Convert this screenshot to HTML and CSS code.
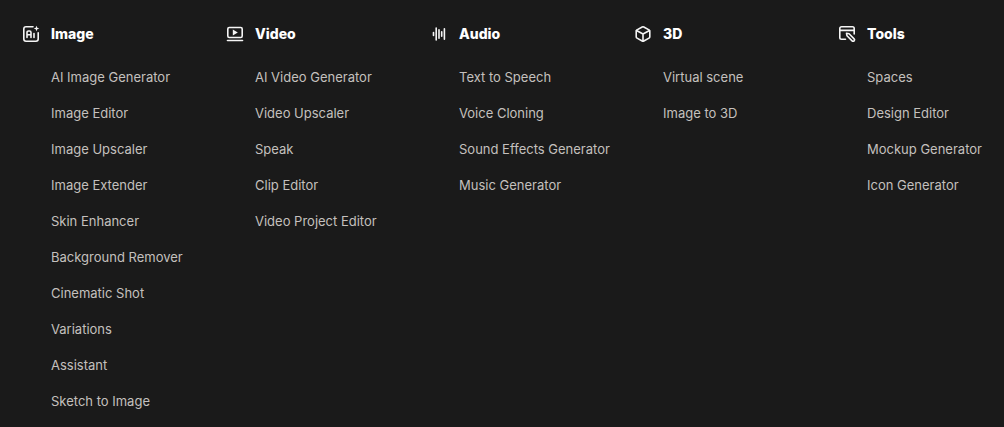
FILE: index.html
```html
<!DOCTYPE html>
<html lang="en">
<head>
<meta charset="utf-8">
<meta name="viewport" content="width=device-width, initial-scale=1">
<title>Tools menu</title>
<link rel="stylesheet" href="styles.css">
</head>
<body>
<nav class="menu" aria-label="Products">
  <section class="group">
    <h2 class="title">
      <svg class="icon" viewBox="0 0 16 16" aria-hidden="true"><path d="M10 .8H3A2.200 2.200 0 0 0 .8 3v10A2.200 2.200 0 0 0 3 15.200h10a2.200 2.200 0 0 0 2.200-2.200V6.800"/><path d="M4 11.500V6.500a1.500 1.500 0 0 1 1.500-1.500h1A1.500 1.500 0 0 1 8 6.500v5M4 8.800h4M11 7.500v4"/><path class="solid" d="M13.500-.3l.8 2 2 .8-2 .8-.8 2-.8-2-2-.8 2-.8z"/></svg>
      Image
    </h2>
    <ul class="list">
      <li><a class="link" href="#">AI Image Generator</a></li>
      <li><a class="link" href="#">Image Editor</a></li>
      <li><a class="link" href="#">Image Upscaler</a></li>
      <li><a class="link" href="#">Image Extender</a></li>
      <li><a class="link" href="#">Skin Enhancer</a></li>
      <li><a class="link" href="#">Background Remover</a></li>
      <li><a class="link" href="#">Cinematic Shot</a></li>
      <li><a class="link" href="#">Variations</a></li>
      <li><a class="link" href="#">Assistant</a></li>
      <li><a class="link" href="#">Sketch to Image</a></li>
    </ul>
  </section>
  <section class="group">
    <h2 class="title">
      <svg class="icon" viewBox="0 0 16 16" aria-hidden="true"><rect x=".8" y="1.500" width="14.400" height="10" rx="1.500"/><path d="M.5 14.500h15"/><path class="solid" d="M5.800 3.600v5.800l5-2.900z"/></svg>
      Video
    </h2>
    <ul class="list">
      <li><a class="link" href="#">AI Video Generator</a></li>
      <li><a class="link" href="#">Video Upscaler</a></li>
      <li><a class="link" href="#">Speak</a></li>
      <li><a class="link" href="#">Clip Editor</a></li>
      <li><a class="link" href="#">Video Project Editor</a></li>
    </ul>
  </section>
  <section class="group">
    <h2 class="title">
      <svg class="icon" viewBox="0 0 16 16" aria-hidden="true"><path d="M2.500 6.500v3M5.200 2v12M8 3.800v8.400M10.700 5.800v4.400M13.400 2.800v10.400"/></svg>
      Audio
    </h2>
    <ul class="list">
      <li><a class="link" href="#">Text to Speech</a></li>
      <li><a class="link" href="#">Voice Cloning</a></li>
      <li><a class="link" href="#">Sound Effects Generator</a></li>
      <li><a class="link" href="#">Music Generator</a></li>
    </ul>
  </section>
  <section class="group">
    <h2 class="title">
      <svg class="icon" viewBox="0 0 16 16" aria-hidden="true"><path d="M7.200 1a1.600 1.600 0 0 1 1.600 0l5.200 2.900a1.600 1.600 0 0 1 .8 1.400v5.400a1.600 1.600 0 0 1-.8 1.400L8.800 15a1.600 1.600 0 0 1-1.600 0L2 12.100a1.600 1.600 0 0 1-.8-1.400V5.300A1.600 1.600 0 0 1 2 3.900z"/><path d="M1.500 4.500L8 8l6.500-3.500M8 8v7"/></svg>
      3D
    </h2>
    <ul class="list">
      <li><a class="link" href="#">Virtual scene</a></li>
      <li><a class="link" href="#">Image to 3D</a></li>
    </ul>
  </section>
  <section class="group">
    <h2 class="title">
      <svg class="icon" viewBox="0 0 16 16" aria-hidden="true"><path d="M6.500 13.200H2.500A1.700 1.700 0 0 1 .8 11.500v-9A1.700 1.700 0 0 1 2.500.8h11a1.700 1.700 0 0 1 1.700 1.700V8M.8 4.400h14.400"/><path d="M7.500 7.300l2.600.4 5 5.200a1.400 1.400 0 0 1-2 2L8 9.800z"/></svg>
      Tools
    </h2>
    <ul class="list">
      <li><a class="link" href="#">Spaces</a></li>
      <li><a class="link" href="#">Design Editor</a></li>
      <li><a class="link" href="#">Mockup Generator</a></li>
      <li><a class="link" href="#">Icon Generator</a></li>
    </ul>
  </section>
</nav>
</body>
</html>
```
FILE: styles.css
```css
* {
  box-sizing: border-box;
}

body {
  margin: 0;
  background: #1a1a1a;
  font-family: Inter, "Liberation Sans", sans-serif;
}

.menu {
  display: grid;
  grid-template-columns: repeat(4, minmax(0, 1fr)) 142px;
  padding: 24px 23px 7px;
}

.title {
  display: flex;
  align-items: center;
  gap: 12px;
  margin: 0 0 15px;
  color: #fff;
  font-size: 14px;
  font-weight: 800;
  line-height: 20px;
}

.icon {
  flex: none;
  width: 16px;
  height: 16px;
  overflow: visible;
  fill: none;
  stroke: #f5f5f5;
  stroke-width: 1.6;
  stroke-linecap: round;
  stroke-linejoin: round;
}

.solid {
  fill: #f5f5f5;
  stroke: none;
}

.list {
  margin: 0;
  padding: 0 0 0 28px;
  list-style: none;
}

.link {
  display: block;
  color: #c4c0be;
  font-size: 13px;
  line-height: 36px;
  text-decoration: none;
  white-space: nowrap;
}
```
